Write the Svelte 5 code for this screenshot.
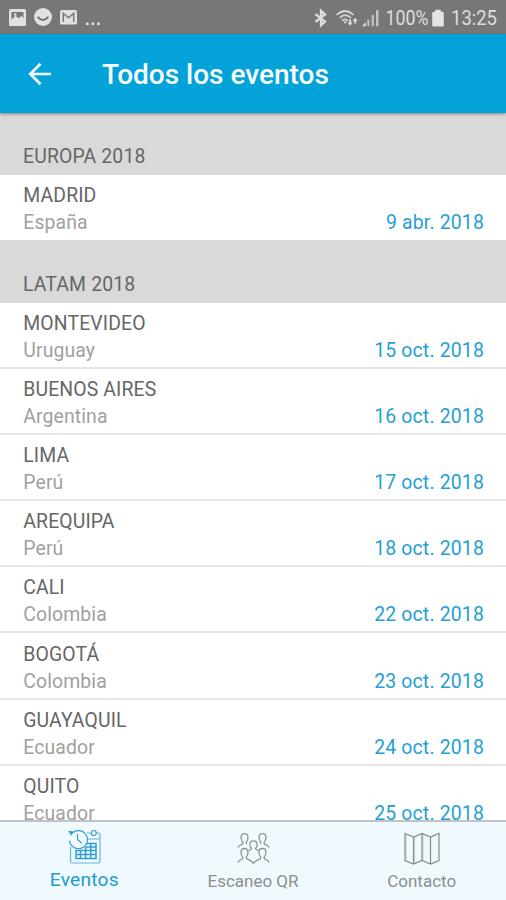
<script>
  const groups = [
    { name: 'EUROPA 2018', events: [['MADRID', 'España', '9 abr. 2018']] },
    {
      name: 'LATAM 2018',
      events: [
        ['MONTEVIDEO', 'Uruguay', '15 oct. 2018'],
        ['BUENOS AIRES', 'Argentina', '16 oct. 2018'],
        ['LIMA', 'Perú', '17 oct. 2018'],
        ['AREQUIPA', 'Perú', '18 oct. 2018'],
        ['CALI', 'Colombia', '22 oct. 2018'],
        ['BOGOTÁ', 'Colombia', '23 oct. 2018'],
        ['GUAYAQUIL', 'Ecuador', '24 oct. 2018'],
        ['QUITO', 'Ecuador', '25 oct. 2018']
      ]
    }
  ];
</script>

<div class="screen">
  <div class="status">
    <div class="notifications">
      <svg width="17" height="17" viewBox="0 0 17 17">
        <rect width="17" height="17" rx="1.5" fill="#e1e1e1" />
        <path d="M2.5 3h12v6l-2.2-2.2L10 9.2 6.3 6.7 2.5 11z" fill="#777" />
        <rect x="5" y="4.4" width="2.4" height="2.2" fill="#e1e1e1" />
      </svg>
      <svg width="18" height="18" viewBox="0 0 18 18">
        <circle cx="9" cy="9" r="9" fill="#e1e1e1" />
        <path d="M4.2 9.4q4.8 5.4 9.6 0" fill="none" stroke="#707070" stroke-width="2" stroke-linecap="round" />
      </svg>
      <svg width="17" height="15" viewBox="0 0 17 15">
        <rect width="17" height="14.5" rx="1.5" fill="#e1e1e1" />
        <path d="M3.3 12V3.3l5.2 4.5 5.2-4.5V12" fill="none" stroke="#777" stroke-width="1.5" />
      </svg>
      <svg class="dots" width="16" height="4" viewBox="0 0 16 4" fill="#e1e1e1">
        <rect x="1" y=".5" width="2.6" height="2.6" /><rect x="6.6" y=".5" width="2.6" height="2.6" /><rect x="12.2" y=".5" width="2.6" height="2.6" />
      </svg>
    </div>
    <div class="system">
      <svg width="13" height="20" viewBox="0 0 13 20">
        <path d="M1.5 6.2 11 13.6l-4 3.6V2.8l4 3.6-9.5 7.4" fill="none" stroke="#dedede" stroke-width="2.3" />
      </svg>
      <svg class="wifi" width="22" height="18" viewBox="0 0 22 18">
        <g fill="none" stroke="#d5d5d5" stroke-width="1.7">
          <path d="M.5 6q8.5-8 17 0" /><path d="M3.5 9q5.5-5.6 11.5 0" /><path d="M6 11.7q3-2.8 6 0" />
        </g>
        <path d="m7.500 12.300 1.800 2.700 1.600-2.700z" fill="#ddd" />
        <path d="m11.500 13.500 2.700 3.300 2.500-3.300h-1.600v-3.200h-1.900v3.200zM16.600 12l2.500-3.200 2.700 3.200h-1.700v2.600h-1.900V12z" fill="#ddd" />
      </svg>
      <svg class="signal" width="18" height="18" viewBox="0 0 18 18" fill="#c2c2c2">
        <path d="M0 17.200 3.800 13v4.200z" fill="#ddd" /><rect x="5.300" y="10.600" width="2" height="6.600" /><rect x="9.700" y="6" width="2.200" height="11.200" /><rect x="14" y="1" width="2.400" height="16.200" />
      </svg>
      <svg class="percent" width="44" height="28" viewBox="0 0 44 28"><text x=".5" y="21.300" textLength="43" lengthAdjust="spacingAndGlyphs">100%</text></svg>
      <svg class="battery" width="12" height="18" viewBox="0 0 12 18"><path d="M3.200.7h5.600v2h1.800q1.200 0 1.200 1.200V16q0 1.500-1.500 1.500H1.600Q.2 17.500.2 16V3.900Q.2 2.700 1.400 2.700h1.800z" fill="#e4e4e4" /></svg>
      <svg class="clock" width="48" height="28" viewBox="0 0 48 28"><text x="0" y="21.300" textLength="46" lengthAdjust="spacingAndGlyphs">13:25</text></svg>
    </div>
  </div>

  <header>
    <svg width="24" height="24" viewBox="0 0 24 24">
      <path d="M24 11H3.500M13.500 .8 3.300 11 13.500 21.200" fill="none" stroke="#f5fbff" stroke-width="2.700" />
    </svg>
    <h1>Todos los eventos</h1>
  </header>

  <main>
    {#each groups as group}
      <section>
        <h2>{group.name}</h2>
        {#each group.events as [city, country, date]}
          <article>
            <div class="city">{city}</div>
            <div class="detail"><span>{country}</span><time>{date}</time></div>
          </article>
        {/each}
      </section>
    {/each}
  </main>

  <nav>
    <div class="tab active">
      <svg width="36" height="36" viewBox="0 0 36 36" fill="none" stroke="#319fce" stroke-width="1.200">
        <path d="M4.500 18V32.500q0 1.500 1.500 1.500h26.500q1.500 0 1.500-1.500V5.500Q34 4 32.500 4H30.500M25 4h-4M21.500 10H34" opacity=".75" />
        <circle cx="27.800" cy="4" r="2.500" />
        <path d="M5.500 5A9 9 0 1 1 3.500 11.500M11.500 5v5.500l4 3.500" />
        <path d="m2 1.700 4.800.5-1.500 4.600z" fill="#319fce" stroke="none" />
        <path d="M21 14.500h9V29.500H10v-8h20M10 25.500h20M14.500 21.500v8M19.600 18v11.500M24.800 14.500v15M20 18h10" stroke-width="1.500" />
      </svg>
      <span>Eventos</span>
    </div>
    <div class="tab scan">
      <svg width="33" height="33" viewBox="0 0 33 33" fill="none" stroke="#8e9696" stroke-width="1.300">
        <path d="M1 15.500q.5-2 3-2.700 2.300-.6 1.800-2.600Q4 8.500 4 5.300 4.200 1.600 7.500 1.600T11 5.300q0 3-1.800 4.900 0 1 .8 1.700" />
        <path d="M32 15.500q-.5-2-3-2.700-2.300-.6-1.800-2.600Q29 8.500 29 5.300q-.2-3.700-3.500-3.700T22 5.300q0 3 1.800 4.900 0 1-.8 1.700" />
        <path d="M11.500 18.500q2.800-.7 3-1.800-1.700-2-1.700-4.700.2-3.200 3.700-3.200t3.700 3.200q0 2.700-1.700 4.700.2 1.100 3 1.800" />
        <path d="M1 30.500q.5-2.200 3-2.800 2.300-.6 1.800-2.600Q4 23.300 4 20.200q.2-3.700 3.500-3.700t3.500 3.700q0 3.100-1.800 4.900-.3 1.800 2 2.400 2 .5 5.300 3.700 3.300-3.200 5.300-3.700 2.300-.6 2-2.400-1.800-1.800-1.800-4.900 0-3.700 3.500-3.700t3.500 3.700q0 3.100-1.800 4.900-.5 2 1.800 2.600 2.500.6 3 2.800" />
      </svg>
      <span>Escaneo QR</span>
    </div>
    <div class="tab contact">
      <svg width="36" height="34" viewBox="0 0 36 34" fill="none" stroke="#838b8c" stroke-width="1.200">
        <path d="M1 1.500 9.500 5 18 1.500 26.500 5 35 1.500V28.500L26.500 32 18 28.500 9.500 32 1 28.500z" />
        <path d="M9.500 5v27M18 1.500v27M26.500 5v27" /><path d="M10.600 5v26M19 2v26M2.100 2v26" opacity=".3" />
      </svg>
      <span>Contacto</span>
    </div>
  </nav>
</div>

<style>
  .screen {
    width: 506px;
    height: 900px;
    display: flex;
    flex-direction: column;
    overflow: hidden;
    background: #fff;
    font-family: Roboto, 'Liberation Sans', sans-serif;
    color: #666;
  }
  svg { display: block; flex: none; overflow: visible; }
  .status {
    height: 34px;
    flex: none;
    display: flex;
    justify-content: space-between;
    background: #777;
  }
  .notifications { display: flex; align-items: center; padding-left: 9px; gap: 8px; }
  .dots { margin-top: 14px; }
  .system { display: flex; align-items: center; padding: 1px 7px 0 0; }
  .wifi { margin-left: 9px; }
  .signal { margin-left: 4px; }
  .percent { margin-left: 5px; }
  .battery { margin: 0 7px 0 3px; }
  .system text { font-size: 20.5px; fill: #dedede; }
  header {
    height: 79px;
    box-sizing: border-box;
    flex: none;
    display: flex;
    align-items: center;
    padding: 2px 0 0 27px;
    background: #03a3da;
    box-shadow: 0 1px 3px rgba(0, 0, 0, .4);
    position: relative;
    z-index: 1;
  }
  h1 { margin: 0 0 0 51px; font-size: 28px; line-height: 34px; font-weight: 500; color: #f8fcff; white-space: nowrap; }
  main { flex: 1; min-height: 0; overflow: hidden; }
  h2 {
    height: 63px;
    box-sizing: border-box;
    margin: 0;
    padding: 33px 23px 0;
    background: #d9d9d9;
    font-size: 19.4px;
    line-height: 24px;
    font-weight: 400;
    letter-spacing: .15px;
  }
  section:first-child h2 { height: 61.5px; padding-top: 31.5px; }
  article {
    height: 66.1px;
    box-sizing: border-box;
    padding: 9.1px 22px 0 23.3px;
    border-bottom: 2px solid #e6e6e6;
    font-size: 19.4px;
    line-height: 24px;
    letter-spacing: .12px;
  }
  h2 + article { height: 66.6px; padding-top: 9.4px; }
  section:first-child article { height: 65px; border-bottom: 0; }
  .detail { display: flex; justify-content: space-between; margin-top: 3px; color: #a0a0a0; }
  time { color: #259fd2; letter-spacing: .18px; }
  nav {
    height: 80px;
    box-sizing: border-box;
    flex: none;
    display: flex;
    border-top: 2px solid #bfc3c5;
    background: #f0f9fd;
  }
  .tab { flex: 1; display: flex; flex-direction: column; align-items: center; padding-top: 10px; color: #898f91; font-size: 17px; }
  .tab span { line-height: 22px; margin-top: 4px; }
  .tab.active { padding-top: 7px; color: #209dce; font-size: 19.2px; }
  .tab.active span { margin-top: 4px; letter-spacing: .2px; }
  .scan span { margin-top: 5px; }
</style>
